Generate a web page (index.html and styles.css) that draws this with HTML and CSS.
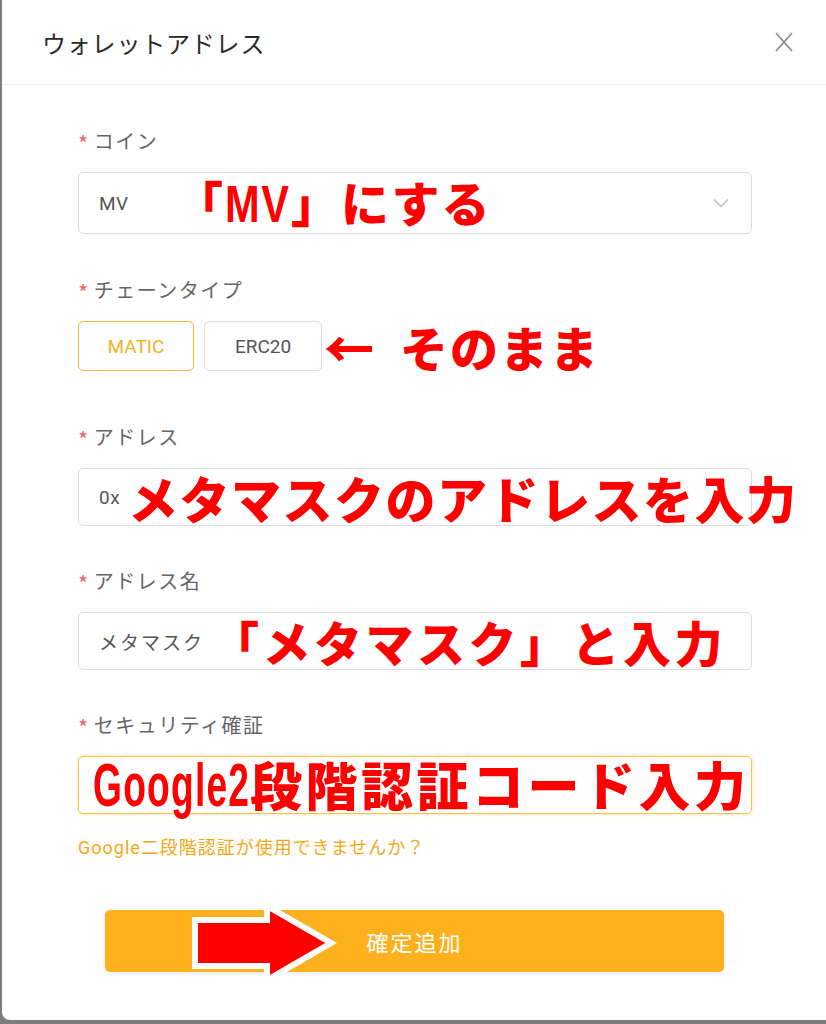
FILE: index.html
```html
<!DOCTYPE html>
<html lang="ja">
<head>
    <meta charset="UTF-8">
    <meta name="viewport" content="width=device-width, initial-scale=1.0">
    <title>ウォレットアドレス</title>
    <link rel="stylesheet" href="styles.css">
</head>
<body>
    <div class="modal">
        <div class="modal-head">
            <span class="modal-title">ウォレットアドレス</span>
            <svg class="close-icon" width="20" height="20" viewBox="0 0 20 20">
                <path d="M2 1 L18 19 M18 1 L2 19" stroke="#8a8a8a" stroke-width="1.6" fill="none"/>
            </svg>
        </div>

        <div class="form">
            <div class="field">
                <div class="label"><span class="req">*</span>コイン</div>
                <div class="box select-box">
                    <span class="value">MV</span>
                    <svg class="chevron" width="16" height="10" viewBox="0 0 16 10">
                        <path d="M1 1.5 L8 8.5 L15 1.5" stroke="#bdbdbd" stroke-width="1.4" fill="none"/>
                    </svg>
                    <span class="note note-coin">「<span class="latin latin-mv">MV</span>」にする</span>
                </div>
            </div>

            <div class="field field-chain">
                <div class="label"><span class="req">*</span>チェーンタイプ</div>
                <div class="chain-row">
                    <button class="chain-btn active">MATIC</button>
                    <button class="chain-btn">ERC20</button>
                    <span class="note-inline note-arrow">←</span>
                    <span class="note-inline note-keep">そのまま</span>
                </div>
            </div>

            <div class="field field-address">
                <div class="label"><span class="req">*</span>アドレス</div>
                <div class="box input-box">
                    <span class="value">0x</span>
                    <span class="note note-address">メタマスクのアドレスを入力</span>
                </div>
            </div>

            <div class="field">
                <div class="label"><span class="req">*</span>アドレス名</div>
                <div class="box input-box">
                    <span class="value value-ja">メタマスク</span>
                    <span class="note note-name">「メタマスク」と入力</span>
                </div>
            </div>

            <div class="field">
                <div class="label"><span class="req">*</span>セキュリティ確証</div>
                <div class="box input-box focus">
                    <span class="note note-code"><span class="latin latin-google">Google2</span>段階認証コード入力</span>
                </div>
                <div class="help-link">Google二段階認証が使用できませんか？</div>
            </div>

            <div class="submit-wrap">
                <button class="submit-btn">確定追加</button>
                <svg class="big-arrow" width="146" height="84" viewBox="0 0 146 84">
                    <path d="M4 18 L76 18 L76 4 L140 41 L76 78 L76 64 L4 64 Z" fill="#ff0000" stroke="#ffffff" stroke-width="6" stroke-linejoin="miter"/>
                </svg>
            </div>
        </div>
    </div>
</body>
</html>
```

FILE: styles.css
```css
body {
    margin: 0;
    background-color: #7e7e7e;
    font-family: Roboto, "Noto Sans CJK JP", sans-serif;
}
.modal {
    margin-left: 2px;
    height: 1020px;
    background-color: #fff;
    border-bottom-left-radius: 8px;
}
.modal-head {
    height: 84px;
    border-bottom: 1px solid #eeeeee;
    display: flex;
    align-items: center;
    justify-content: space-between;
    padding: 0 32px 0 40px;
}
.modal-title {
    font-family: "Noto Sans CJK JP", sans-serif;
    font-size: 24px;
    letter-spacing: 0.8px;
    color: #2a2a2a;
}
.form {
    padding: 0 74px 0 76px;
}
.field {
    padding-top: 43px;
}
.field:first-child {
    padding-top: 44px;
}
.field-chain {
    padding-top: 44px;
}
.field-address {
    padding-top: 54px;
}
.label {
    font-family: "Noto Sans CJK JP", sans-serif;
    font-size: 20px;
    letter-spacing: 1.5px;
    line-height: 24px;
    height: 24px;
    color: #666;
    margin-bottom: 19px;
}
.req {
    font-size: 22px;
    line-height: 0;
    color: #f56262;
    margin-right: 4px;
    position: relative;
    top: 3px;
}
.box {
    position: relative;
    height: 58px;
    border: 1px solid #dcdcdc;
    border-radius: 5px;
    display: flex;
    align-items: center;
    padding: 0 20px;
    box-sizing: border-box;
}
.select-box {
    height: 62px;
    justify-content: space-between;
}
.box.focus {
    border-color: #f7c24a;
    box-shadow: 0 0 4px rgba(247, 180, 40, 0.45);
}
.value {
    font-size: 19px;
    letter-spacing: 0.5px;
    color: #555;
}
.value-ja {
    letter-spacing: 2px;
}
.chevron {
    margin-right: 2px;
}
.chain-row {
    display: flex;
    align-items: center;
}
.chain-btn {
    height: 50px;
    border: 1px solid #dcdcdc;
    border-radius: 5px;
    background-color: #fff;
    font-family: Roboto, sans-serif;
    font-size: 19px;
    color: #555;
    width: 118px;
    margin-right: 10px;
}
.chain-btn.active {
    width: 116px;
    border-color: #f7bb36;
    color: #f7b126;
}
.note, .note-inline {
    font-family: "Noto Sans CJK JP", sans-serif;
    color: #ff0000;
    font-weight: 900;
    line-height: 1;
    white-space: nowrap;
    text-shadow: 0 0 2px #fff, 0 0 2px #fff;
}
.note {
    position: absolute;
    top: 50%;
    transform: translateY(-50%);
}
.latin {
    display: inline-block;
    font-family: "Liberation Sans", sans-serif;
    font-weight: 700;
    transform-origin: left center;
}
.latin-mv {
    font-size: 52px;
    transform: scaleX(0.8);
    margin-right: -16px;
}
.latin-google {
    font-size: 62px;
    letter-spacing: 2px;
    transform: scaleX(0.6);
    margin-right: -105px;
}
.note-coin {
    left: 96px;
    font-size: 48px;
    letter-spacing: 2px;
}
.note-arrow {
    font-size: 50px;
    margin-left: -8px;
}
.note-keep {
    font-size: 48px;
    margin-left: 26px;
    letter-spacing: 2px;
}
.note-address {
    left: 49px;
    font-size: 50px;
    letter-spacing: 1.5px;
}
.note-name {
    left: 132px;
    font-size: 48px;
    letter-spacing: 3.5px;
}
.note-code {
    left: 14px;
    font-size: 52px;
    letter-spacing: 3.5px;
}
.help-link {
    margin-top: 19px;
    font-size: 18px;
    letter-spacing: 1px;
    color: #f5a716;
}
.submit-wrap {
    position: relative;
    margin: 51px 28px 0 27px;
}
.submit-btn {
    width: 100%;
    height: 62px;
    border: none;
    border-radius: 5px;
    background-color: #fcb11d;
    color: #fff;
    font-family: "Noto Sans CJK JP", sans-serif;
    font-size: 22px;
    letter-spacing: 2px;
    box-shadow: 0 2px 4px rgba(0, 0, 0, 0.08);
}
.big-arrow {
    position: absolute;
    left: 86px;
    top: -8px;
}
```
